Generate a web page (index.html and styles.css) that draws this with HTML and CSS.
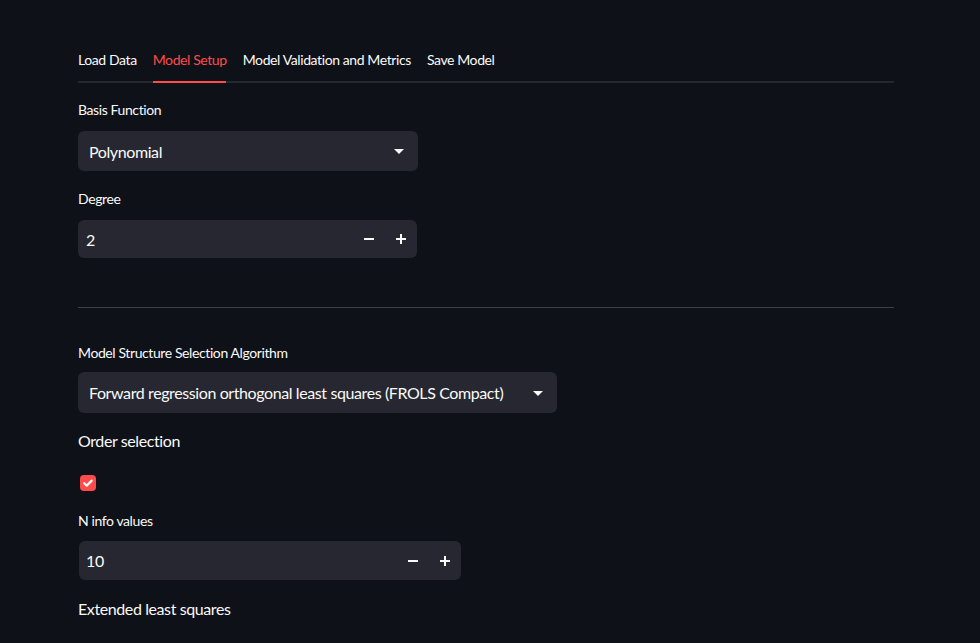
FILE: index.html
```html
<!DOCTYPE html>
<html>
<head>
<meta charset="utf-8">
<link rel="stylesheet" href="styles.css">
</head>
<body>
<div class="main">
  <div class="tabs">
    <div class="tab">Load Data</div>
    <div class="tab active">Model Setup</div>
    <div class="tab">Model Validation and Metrics</div>
    <div class="tab">Save Model</div>
  </div>

  <div class="label first">Basis Function</div>
  <div class="select w340">
    <span class="value">Polynomial</span>
    <svg class="chev" width="12" height="12" viewBox="0 0 12 12"><path d="M1 4h10l-5 5z" fill="#fafafa"/></svg>
  </div>

  <div class="label">Degree</div>
  <div class="number w339">
    <span class="num-value">2</span>
    <div class="steps">
      <div class="step"><svg width="10" height="10" viewBox="0 0 10 10"><rect x="0" y="4" width="10" height="2" fill="#fafafa"/></svg></div>
      <div class="step"><svg width="10" height="10" viewBox="0 0 10 10"><rect x="0" y="4" width="10" height="2" fill="#fafafa"/><rect x="4" y="0" width="2" height="10" fill="#fafafa"/></svg></div>
    </div>
  </div>

  <hr class="divider">

  <div class="label second">Model Structure Selection Algorithm</div>
  <div class="select w479 tall">
    <span class="value">Forward regression orthogonal least squares (FROLS Compact)</span>
    <svg class="chev" width="12" height="12" viewBox="0 0 12 12"><path d="M1 4h10l-5 5z" fill="#fafafa"/></svg>
  </div>

  <div class="text order">Order selection</div>

  <div class="checkbox">
    <svg width="16" height="16" viewBox="0 0 16 16"><rect width="16" height="16" rx="4" fill="#ff4b4b"/><path d="M4.2 8.2l2.5 2.4 5-5" stroke="#fafafa" stroke-width="2.2" fill="none" stroke-linecap="round" stroke-linejoin="round"/></svg>
  </div>

  <div class="label ninfo">N info values</div>
  <div class="number w382 n2">
    <span class="num-value">10</span>
    <div class="steps">
      <div class="step"><svg width="10" height="10" viewBox="0 0 10 10"><rect x="0" y="4" width="10" height="2" fill="#fafafa"/></svg></div>
      <div class="step"><svg width="10" height="10" viewBox="0 0 10 10"><rect x="0" y="4" width="10" height="2" fill="#fafafa"/><rect x="4" y="0" width="2" height="10" fill="#fafafa"/></svg></div>
    </div>
  </div>

  <div class="text ext">Extended least squares</div>
</div>
</body>
</html>
```

FILE: styles.css
```css
html, body {
  margin: 0;
  padding: 0;
  background: #0e1117;
  color: #fafafa;
  font-family: "Lato", "Liberation Sans", sans-serif;
  letter-spacing: -0.4px;
  height: 643px;
  overflow: hidden;
}

.main {
  width: 816px;
  padding-left: 78px;
}

.tabs {
  margin-top: 40px;
  height: 41px;
  display: flex;
  gap: 16px;
  border-bottom: 2px solid #25272e;
}

.tab {
  position: relative;
  font-size: 14px;
  line-height: 40px;
  color: #fafafa;
}

.tab.active {
  color: #ff4b4b;
}

.tab.active::after {
  content: "";
  position: absolute;
  left: 0;
  right: 1px;
  bottom: -2px;
  height: 2px;
  background: #ff4b4b;
}

.label {
  font-size: 14px;
  line-height: 20px;
  height: 20px;
  margin-top: 18px;
  margin-bottom: 11px;
  box-sizing: border-box;
}

.label.first { margin-top: 17px; }
.label.second { margin-top: 34px; margin-bottom: 10px; padding-top: 1px; }
.label.ninfo { margin-top: 19px; padding-top: 1px; }

.select {
  height: 40px;
  background: #262730;
  border-radius: 6px;
  display: flex;
  align-items: center;
  justify-content: space-between;
  padding: 0 13px 0 11px;
  box-sizing: border-box;
  font-size: 16px;
}

.select.tall { height: 41px; padding-right: 13px; }

.w340 { width: 340px; }
.w479 { width: 479px; }
.w339 { width: 339px; }
.w382 { width: 382px; margin-left: 1px; }

.chev { display: block; }

.number {
  height: 38px;
  background: #262730;
  border-radius: 6px;
  display: flex;
  align-items: center;
  justify-content: space-between;
  box-sizing: border-box;
  padding-left: 8px;
  font-size: 16px;
}

.number.n2 { height: 39px; padding-left: 7px; }

.steps {
  display: flex;
  height: 100%;
}

.step {
  width: 32px;
  display: flex;
  align-items: center;
  justify-content: center;
}

.divider {
  border: none;
  height: 1px;
  background: #3d3f45;
  margin: 49px 0 0 0;
}

.text {
  font-size: 16px;
  line-height: 24px;
  padding-top: 1px;
}

.text.order { margin-top: 15px; }
.text.ext { margin-top: 16px; }

.checkbox {
  margin-top: 22px;
  margin-left: 2px;
  height: 16px;
}

.checkbox svg { display: block; }
```
